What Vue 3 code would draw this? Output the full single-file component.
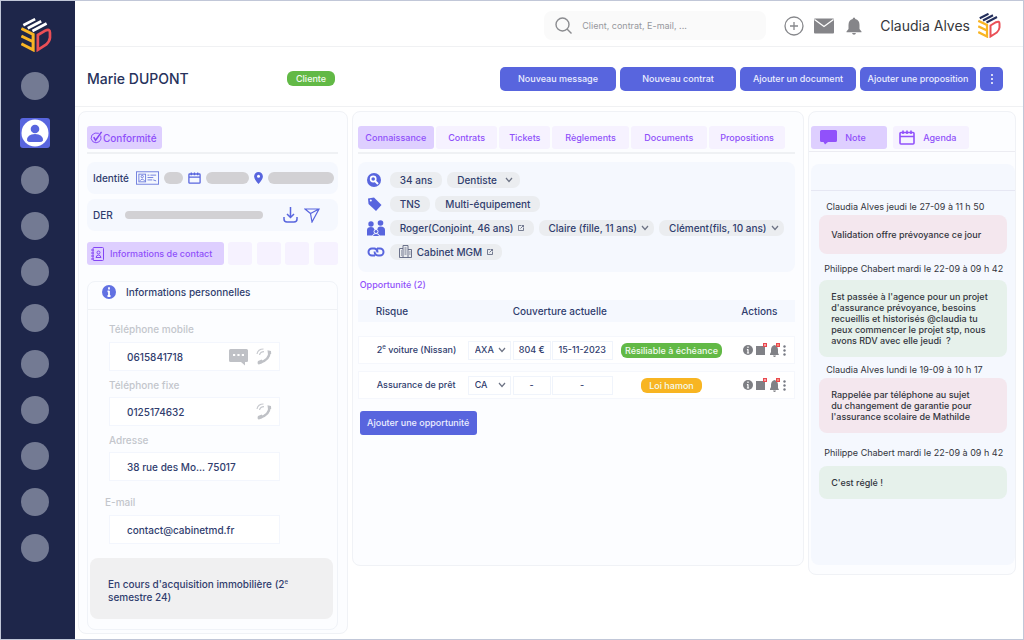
<script setup>
import { h, ref } from 'vue'

const Logo = (props) =>
  h('svg', { viewBox: '0 0 92 100', fill: 'none', 'aria-hidden': 'true' }, [
    h('path', { d: 'M7 21L42 3M20 30L60 9M34 38L76 16', stroke: props.bars, 'stroke-width': 8 }),
    h('path', { d: 'M1 31L36 48V94L1 76M1 53L36 70', stroke: '#f9b524', 'stroke-width': 9 }),
    h('path', { d: 'M50 50L72 37Q86 30 86 43V58Q85 69 75 78L50 94Z', stroke: '#ea4f56', 'stroke-width': 8 })
  ])
Logo.props = ['bars']

const Chevron = () =>
  h('svg', { class: 'chev', viewBox: '0 0 8 6', width: 8, height: 6, fill: 'none', stroke: '#6d7384', 'stroke-width': 1.2, 'aria-hidden': 'true' }, [
    h('path', { d: 'M1 1L4 4.5L7 1' })
  ])

const Ext = () =>
  h('svg', { viewBox: '0 0 12 12', width: 6, height: 6, fill: 'none', stroke: '#555d78', 'stroke-width': 1.6, 'aria-hidden': 'true' }, [
    h('path', { d: 'M6 1H1V11H11V6M5 7L11 1M7 1H11V5' })
  ])

const Calendar = () =>
  h('svg', { viewBox: '0 0 16 15', fill: 'none', stroke: 'currentColor', 'stroke-width': 1.6, 'aria-hidden': 'true' }, [
    h('path', { d: 'M2 2.500H14Q15 2.500 15 3.500V13Q15 14 14 14H2Q1 14 1 13V3.500Q1 2.500 2 2.500ZM1 6.500H15M4 0.500V4M8 0.500V4M12 0.500V4' })
  ])

const Phone = () =>
  h('svg', { viewBox: '0 0 16 17', width: 16, height: 17, fill: 'none', 'aria-hidden': 'true' }, [
    h('path', { d: 'M13.5 4Q13.5 12 4 14.5', stroke: '#bfc1c6', 'stroke-width': 2.4 }),
    h('path', { d: 'M11.5 2.2L15 3L15.2 6L12 6.6ZM2 13L5.8 11.6L6.6 15L3 16.6Q0.8 16 2 13Z', fill: '#bfc1c6' }),
    h('path', { d: 'M1 6Q2 1 7.5 1M3.5 7Q4.2 3.6 8 3.6', stroke: '#c8cacf', 'stroke-width': 1.2 })
  ])

const tabs = ['Connaissance', 'Contrats', 'Tickets', 'Règlements', 'Documents', 'Propositions']
const actions = ['Nouveau message', 'Nouveau contrat', 'Ajouter un document', 'Ajouter une proposition']
const fields = [
  { id: 'mobile', label: 'Téléphone mobile', value: '0615841718', sms: true, call: true },
  { id: 'fixe', label: 'Téléphone fixe', value: '0125174632', call: true },
  { id: 'adresse', label: 'Adresse', value: '38 rue des Mo... 75017' },
  { id: 'email', label: 'E-mail', value: 'contact@cabinetmd.fr' }
]
const rows = [
  { exp: 'e', name: ['2', ' voiture (Nissan)'], insurer: 'AXA', price: '804 €', date: '15-11-2023', tag: 'Résiliable à échéance', tone: 'green' },
  { exp: '', name: ['Assurance de prêt', ''], insurer: 'CA', price: '-', date: '-', tag: 'Loi hamon', tone: 'amber' }
]
const notes = [
  { who: 'Claudia Alves jeudi le 27-09 à 11 h 50', text: ['Validation offre prévoyance ce jour'], tone: 'pink first' },
  { who: 'Philippe Chabert mardi le 22-09 à 09 h 42', text: ["Est passée à l'agence pour un projet", "d'assurance prévoyance, besoins", 'recueillis et historisés @claudia tu', 'peux commencer le projet stp, nous', 'avons RDV avec elle jeudi  ?'], tone: 'mint' },
  { who: 'Claudia Alves lundi le 19-09 à 10 h 17', text: ['Rappelée par téléphone au sujet', 'du changement de garantie pour', "l'assurance scolaire de Mathilde"], tone: 'pink' },
  { who: 'Philippe Chabert mardi le 22-09 à 09 h 42', text: ["C'est réglé !"], tone: 'mint last' }
]
const active = ref('Connaissance')
</script>

<template>
  <div class="app">
    <nav class="side" aria-label="Navigation">
      <Logo class="side-logo" bars="#ffffff" />
      <button class="dot" aria-label="Accueil"></button>
      <button class="dot current" aria-label="Clients">
        <svg viewBox="0 0 30 30" width="30" height="30"><circle cx="15" cy="15" r="13.5" fill="#fff" /><circle cx="15" cy="11" r="4.3" fill="#5865de" /><path d="M7 22.500Q7 16 15 16T23 22.500Q22 24 20 24H10Q8 24 7 22.500Z" fill="#5865de" /></svg>
      </button>
      <button v-for="n in 9" :key="n" class="dot" :aria-label="'Module ' + n"></button>
    </nav>

    <div class="main">
      <header class="top">
        <label class="search">
          <svg viewBox="0 0 17 17" width="17" height="17" fill="none" stroke="#8b8c90" stroke-width="1.4"><circle cx="7.500" cy="7.500" r="6.500" /><path d="M12 12L16.500 16.500" /></svg>
          <input type="text" placeholder="Client, contrat, E-mail, ..." aria-label="Recherche" />
        </label>
        <button class="icon" aria-label="Ajouter"><svg viewBox="0 0 20 20" width="20" height="20" fill="none" stroke="#87888c" stroke-width="1.300"><circle cx="10" cy="10" r="9" /><path d="M10 6V14M6 10H14" /></svg></button>
        <button class="icon mail" aria-label="Messages"><svg viewBox="0 0 20 16" width="20" height="16"><rect y="0.500" width="20" height="15" rx="1" fill="#858589" /><path d="M0.500 1.500L10 8.500L19.500 1.500" fill="none" stroke="#fff" stroke-width="1.300" /></svg></button>
        <button class="icon bell" aria-label="Alertes"><svg viewBox="0 0 16 18" width="16" height="18" fill="#858589"><path d="M8 0.500Q9.300 0.500 9.300 2Q13.500 3 13.500 8V12L15.500 14.500V15.300H0.500V14.500L2.500 12V8Q2.500 3 6.700 2Q6.700 0.500 8 0.500ZM6 16H10Q9.500 17.700 8 17.700T6 16Z" /></svg></button>
        <span class="user">Claudia Alves</span>
        <Logo class="user-logo" bars="#242f5c" />
      </header>

      <section class="client">
        <h1>Marie DUPONT</h1>
        <span class="tag green status">Cliente</span>
        <div class="actions">
          <button v-for="a in actions" :key="a" class="btn">{{ a }}</button>
          <button class="btn more" aria-label="Plus"><i></i><i></i><i></i></button>
        </div>
      </section>

      <div class="cols">
        <aside class="panel left">
          <div class="tabrow lined">
            <button class="tab on conf">
              <svg viewBox="0 0 14 14" width="13" height="13" fill="none" stroke="#8445f5"><path d="M11.500 5Q13 9 10 11.500Q6.500 14 3 11.500Q0 8.500 2 4.500Q5 1 9.500 2.500" stroke-width="1" /><path d="M4 6.500L6 10L12.500 1" stroke-width="1.600" /></svg>Conformité
            </button>
          </div>
          <div class="card ident">
            <span>Identité</span>
            <svg viewBox="0 0 24 14" width="23" height="14" fill="none" stroke="#7280de"><rect x="0.500" y="0.500" width="23" height="13" /><rect x="3" y="3" width="7" height="8" /><circle cx="6.500" cy="5.500" r="1.200" /><path d="M4 10Q6.500 6.500 9 10M12 4H14M15 4H21M12 6.500H18M12 9H17M18 9L21 10" /></svg>
            <b class="bar b1"></b>
            <Calendar class="cal" />
            <b class="bar b2"></b>
            <svg viewBox="0 0 9 12" width="9" height="12"><path d="M4.500 0A4.400 4.400 0 0 1 8.900 4.400Q8.900 7 4.500 12Q0.100 7 0.100 4.400A4.400 4.400 0 0 1 4.500 0Z" fill="#5865de" /><circle cx="4.500" cy="4.300" r="1.500" fill="#fff" /></svg>
            <b class="bar b3"></b>
          </div>
          <div class="card der">
            <span>DER</span>
            <b class="bar thin"></b>
            <button class="icon" aria-label="Télécharger"><svg viewBox="0 0 15 16" width="15" height="16" fill="none" stroke="#5865de" stroke-width="1.500"><path d="M7.500 0V10M4 7L7.500 10.500L11 7M1 10V12Q1 15 4 15H11Q14 15 14 12V10" /></svg></button>
            <button class="icon" aria-label="Envoyer"><svg viewBox="0 0 16 15" width="16" height="15" fill="none" stroke="#5865de" stroke-width="1.200"><path d="M1 1H15L8 14L6.500 5.500ZM1 1L6.500 5.500L15 1" /></svg></button>
          </div>
          <div class="tabrow contact">
            <button class="tab on">
              <svg viewBox="0 0 13 14" width="13" height="14" fill="none" stroke="#8445f5"><rect x="2" y="0.500" width="10.500" height="13" rx="1" /><path d="M0 3H3M0 6H3M0 9H3M0 12H3M5 10.500H10Q9.500 8 7.500 8T5 10.500Z" /><circle cx="7.500" cy="5.500" r="1.500" /></svg>Informations de contact
            </button>
            <button v-for="n in 4" :key="n" class="tab blank" :aria-label="'Section ' + n"></button>
          </div>
          <section class="perso">
            <h2>
              <svg viewBox="0 0 14 14" width="14" height="14"><circle cx="7" cy="7" r="7" fill="#6271e2" /><path d="M7 2.300V4.500M7 5.700V11.500M5.500 6.300H7M5.500 11H8.500" stroke="#fff" stroke-width="1.800" fill="none" /></svg>Informations personnelles
            </h2>
            <div class="form">
              <div v-for="f in fields" :key="f.id" class="field" :class="f.id">
                <label :for="f.id">{{ f.label }}</label>
                <div class="box">
                  <input :id="f.id" type="text" :value="f.value" />
                  <button v-if="f.sms" class="icon" aria-label="SMS"><svg viewBox="0 0 19 18" width="19" height="18"><path d="M1.500 1H17.500Q19 1 19 2.500V13Q19 14 17.500 14H16V17.500L12 14H1.500Q0 14 0 12.500V2.500Q0 1 1.500 1Z" fill="#bfc1c6" /><path d="M4 7H6.200M8.400 7H10.600M12.800 7H15" stroke="#fff" stroke-width="2.200" /></svg></button>
                  <button v-if="f.call" class="icon" aria-label="Appeler"><Phone /></button>
                </div>
              </div>
            </div>
            <p class="memo">En cours d'acquisition immobilière (2<sup>e</sup><br />semestre 24)</p>
          </section>
        </aside>

        <main class="panel mid">
          <div class="tabrow lined six">
            <button v-for="t in tabs" :key="t" class="tab" :class="{ on: t === active }" @click="active = t">{{ t }}</button>
          </div>
          <section class="card info">
            <div class="line">
              <svg viewBox="0 0 14 14" width="14" height="14"><circle cx="7" cy="7" r="7" fill="#5865de" /><circle cx="6.200" cy="6" r="2.600" fill="none" stroke="#fff" stroke-width="1.600" /><path d="M8 8L11 11" stroke="#fff" stroke-width="2" /></svg>
              <span class="chip">34 ans</span>
              <button class="chip wide">Dentiste <Chevron /></button>
            </div>
            <div class="line">
              <svg viewBox="0 0 15 14" width="15" height="14"><path d="M1 1.500L7 0.500L14.500 8L9 14L1.500 7Z" fill="#5865de" /><circle cx="3.800" cy="3.500" r="1" fill="#fff" /></svg>
              <span class="chip">TNS</span>
              <span class="chip">Multi-équipement</span>
            </div>
            <div class="line">
              <svg viewBox="0 0 18 16" width="18" height="16" fill="#5865de"><circle cx="4" cy="4" r="2.700" /><circle cx="13.500" cy="3" r="2.800" /><path d="M0 15.500V10Q0 7 4 7Q7 7 7 9L9 11L10.500 9Q10.500 6.500 13.500 6.500Q18 6.500 18 10V15.500Z" /><circle cx="9" cy="11.500" r="2" stroke="#f5f8fe" /><path d="M5.500 16Q6 13.500 9 13.500T12.500 16" stroke="#f5f8fe" /></svg>
              <span class="chip">Roger(Conjoint, 46 ans) <Ext /></span>
              <button class="chip">Claire (fille, 11 ans) <Chevron /></button>
              <button class="chip">Clément(fils, 10 ans) <Chevron /></button>
            </div>
            <div class="line">
              <svg viewBox="0 0 18 10" width="18" height="10" fill="none" stroke="#5865de" stroke-width="2"><path d="M8 8.500H5A3.500 3.500 0 0 1 5 1.500H7.500Q10.500 2 10.500 5.500M10 1.500H13A3.500 3.500 0 0 1 13 8.500H11Q7.500 8 7.500 4.500" /></svg>
              <span class="chip firm"><svg viewBox="0 0 13 13" width="13" height="13" fill="none" stroke="#5d6580" stroke-width="0.900"><path d="M4 12.500V0.500H9V12.500M4 3.500H0.500V12.500H12.500V4.500H9M5.500 3H7.500M5.500 5H7.500M5.500 7H7.500M5.500 9H7.500M2 6H3M2 8H3M2 10H3M10.200 7H11.500M10.200 9H11.500" /></svg>Cabinet MGM <Ext /></span>
            </div>
          </section>

          <h2 class="opp">Opportunité (2)</h2>
          <table>
            <colgroup><col class="c1" /><col class="c2" /><col class="c3" /><col class="c4" /><col /><col class="c6" /></colgroup>
            <thead>
              <tr><th colspan="2" class="pad">Risque</th><th colspan="3">Couverture actuelle</th><th class="act-head">Actions</th></tr>
            </thead>
            <tbody>
              <tr v-for="(r, i) in rows" :key="i">
                <td class="pad">{{ r.name[0] }}<sup v-if="r.exp">{{ r.exp }}</sup>{{ r.name[1] }}</td>
                <td>
                  <label class="pick"><select :aria-label="'Assureur ' + (i + 1)"><option>{{ r.insurer }}</option></select><Chevron /></label>
                </td>
                <td><span class="cell">{{ r.price }}</span></td>
                <td><span class="cell">{{ r.date }}</span></td>
                <td class="mid-cell"><span class="tag" :class="r.tone">{{ r.tag }}</span></td>
                <td>
                  <div class="acts">
                    <button class="icon" aria-label="Détails"><svg viewBox="0 0 10 10" width="10" height="10"><circle cx="5" cy="5" r="5" fill="#7d7e83" /><path d="M5 1.500V3.100M5 4.200V8.300M3.900 4.600H5M3.900 8H6.100" stroke="#fff" stroke-width="1.200" fill="none" /></svg></button>
                    <button class="icon" aria-label="Messages"><svg viewBox="0 0 11 14" width="11" height="14"><path d="M0 3H9V12H0Z" fill="#808186" /><rect x="7" y="0" width="4" height="4" fill="#e9484f" /><path d="M9 1V3" stroke="#fff" /></svg></button>
                    <button class="icon" aria-label="Alertes"><svg viewBox="0 0 10 14" width="10" height="14"><path d="M4.500 2Q8 3 8 7V10L9 12H0V11L1 9V7Q1 3 4.500 2ZM3 12.500H6Q5.500 14 4.500 14T3 12.500Z" fill="#808186" /><rect x="6" y="0" width="4" height="4" fill="#e9484f" /><path d="M8 1V3" stroke="#ffd9a0" /></svg></button>
                    <button class="icon" aria-label="Plus"><svg viewBox="0 0 3 11" width="3" height="11" fill="#777a84"><circle cx="1.500" cy="1.500" r="1.200" /><circle cx="1.500" cy="5.500" r="1.200" /><circle cx="1.500" cy="9.500" r="1.200" /></svg></button>
                  </div>
                </td>
              </tr>
            </tbody>
          </table>
          <button class="btn add">Ajouter une opportunité</button>
        </main>

        <aside class="panel right">
          <div class="tabrow">
            <button class="tab on note-tab"><svg viewBox="0 0 17 15" width="17" height="15" fill="#9151fb"><path d="M1.500 0H15.500Q17 0 17 1.500V10.500Q17 12 15.500 12H8L5 14.500L3.500 12H1.500Q0 12 0 10.500V1.500Q0 0 1.500 0Z" /></svg>Note</button>
            <button class="tab"><Calendar class="cal" />Agenda</button>
          </div>
          <section class="notes">
            <div class="notes-head"></div>
            <article v-for="(n, i) in notes" :key="i" :class="n.tone">
              <h3>{{ n.who }}</h3>
              <p><template v-for="(l, j) in n.text" :key="j"><br v-if="j" />{{ l }}</template></p>
            </article>
          </section>
        </aside>
      </div>
    </div>
  </div>
</template>

<style>
body { background: #fff; }
</style>

<style scoped>
* { box-sizing: border-box; }
.app { display: flex; min-height: 100vh; border: 1px solid #c1c7d8; font-family: Inter, "Liberation Sans", sans-serif; color: #303d6e; font-size: 10px; line-height: 12px; font-weight: 500; }
h1, h2, h3, p { margin: 0; font-weight: 500; }
button { font: inherit; color: inherit; border: 0; padding: 0; background: none; cursor: pointer; }
input, select { font: inherit; color: inherit; border: 0; padding: 0; background: none; outline: 0; min-width: 0; }
svg { flex: none; }
.icon { display: flex; }

.side { flex: none; width: 74px; background: #1e264a; padding: 17px 0 0 20px; display: flex; flex-direction: column; align-items: flex-start; gap: 18px; }
.side-logo { width: 31px; height: 34px; margin-bottom: 2px; }
.dot { width: 28px; height: 28px; border-radius: 50%; background: #737a93; flex: none; }
.dot.current { width: 30px; height: 30px; margin-left: -1px; border-radius: 3px; background: #5865de; }

.main { flex: 1; min-width: 0; display: flex; flex-direction: column; }
.top { height: 46px; display: flex; align-items: center; justify-content: flex-end; padding: 4px 22px 0 0; border-bottom: 1px solid #f0f1f3; }
.search { display: flex; align-items: center; gap: 10px; width: 222px; height: 29px; border-radius: 8px; background: #fafafa; padding: 0 11px; margin-right: 18px; }
.search input { flex: 1; font-size: 9px; font-weight: 400; height: 20px; }
.search input::placeholder { color: #97989d; opacity: 1; }
.mail { margin-left: 10px; }
.bell { margin: 0 18px 0 12px; }
.user { font-size: 14px; line-height: 18px; font-weight: 400; color: #36373c; margin-right: 8px; }
.user-logo { width: 23px; height: 25px; }

.client { height: 60px; display: flex; align-items: center; padding: 4px 20px 0 12px; border-bottom: 1px solid #f0f1f3; }
.client h1 { width: 200px; font-size: 14px; line-height: 18px; color: #27325c; }
.tag { display: inline-block; color: #f3fbef; border-radius: 6px; font-size: 9px; line-height: 15px; padding: 0 4px; white-space: nowrap; }
.green { background: #62b946; }
.amber { background: #f8b522; padding: 0 8px; }
.status { padding: 0 9px; }
.actions { display: flex; gap: 4px; margin-left: auto; }
.btn { background: #5865de; color: #eceeff; border-radius: 5px; height: 24px; width: 116px; font-size: 9px; white-space: nowrap; }
.more { width: 23px; display: flex; flex-direction: column; align-items: center; justify-content: center; gap: 2px; }
.more i { width: 2px; height: 2px; background: #fff; border-radius: 50%; }

.cols { display: grid; grid-template-columns: 270fr 453fr 208fr; gap: 4px; align-items: start; padding: 4px 7px 4px 3px; }
.panel { border: 1px solid #f0f2f6; border-radius: 8px; background: #fcfdff; min-width: 0; }
.tab { height: 23px; border-radius: 3px; background: #f6f2ff; color: #8f50fa; font-size: 9px; white-space: nowrap; display: flex; align-items: center; justify-content: center; }
.tab.on { background: #decfff; }
.tabrow { display: flex; }
.lined { padding-bottom: 3px; border-bottom: 2px solid #eff1f4; }
.card { background: #f5f8fe; border-radius: 8px; }

.left { padding: 14px 9px 3px 8px; }
.left .lined { margin-bottom: 8px; }
.tab.conf { width: 75px; font-size: 10px; justify-content: flex-start; padding-left: 3px; }
.ident, .der { height: 32px; display: flex; align-items: center; padding: 0 4px 0 6px; }
.ident { justify-content: space-between; margin-bottom: 5px; }
.ident span { width: 38px; }
.bar { height: 12px; border-radius: 6px; background: #d2d1d4; }
.b1 { width: 19px; }
.b2 { width: 43px; }
.b3 { width: 66px; }
.thin { width: 138px; height: 8px; margin: 0 20px 0 12px; }
.der .icon { margin-right: 6px; }
.cal { width: 13px; height: 12px; color: #5865de; }
.contact { margin: 11px 0 16px; justify-content: space-between; }
.contact .on { width: 137px; gap: 6px; justify-content: flex-start; padding-left: 4px; }
.blank { width: 24px; }

.perso { border: 1px solid #f0f3f8; border-radius: 8px; padding-bottom: 10px; }
.perso h2 { display: flex; align-items: center; gap: 10px; height: 28px; padding: 0 0 7px 14px; font-size: 10px; border-bottom: 1px solid #eff1f4; }
.form { padding: 12px 57px 0 21px; }
.field label { display: block; color: #c3c6cc; font-size: 10px; line-height: 14px; margin-bottom: 6px; }
.box { display: flex; align-items: center; gap: 8px; height: 29px; background: #fff; border: 1px solid #f3f6fd; padding: 0 7px 0 17px; margin-bottom: 7px; }
.box input { flex: 1; height: 20px; }
.fixe label, .adresse label { margin-bottom: 5px; }
.adresse .box, .email .box { margin-bottom: 14px; }
.email label { margin-left: -4px; }
.memo { background: #f0f0f1; border-radius: 8px; margin: 0 4px 0 2px; padding: 20px 18px 15px; line-height: 13px; }

.mid { padding: 14px 8px 130px 5px; }
.six { gap: 2px; padding-right: 10px; margin-bottom: 8px; }
.six .tab { flex: 1 1 76px; }
.six .tab:nth-child(2) { flex-basis: 61px; }
.six .tab:nth-child(3) { flex-basis: 51px; }
.info { padding: 9px 0 12px 9px; display: flex; flex-direction: column; gap: 7px; }
.line { display: grid; grid-template-columns: 18px repeat(3, max-content); align-items: center; column-gap: 5px; height: 17px; }
.chip { display: flex; align-items: center; gap: 4px; height: 16px; border-radius: 7px; background: #ebedf0; padding: 0 10px; white-space: nowrap; }
.line .chip .chev { margin-right: -5px; }
.line .wide { gap: 8px; }
.line .wide .chev { margin-right: -3px; }
.firm { padding: 0 9px; gap: 5px; }
.opp { color: #9151fb; font-size: 9px; line-height: 12px; margin: 7px 0 9px 2px; }
table { width: 100%; table-layout: fixed; border-spacing: 0 7px; margin: -7px 0 5px; font-size: 9px; }
.c1 { width: 110px; }
.c2 { width: 45px; }
.c3 { width: 39px; }
.c4 { width: 62px; }
.c6 { width: 66px; }
th { background: #f5f8fe; text-align: left; font-weight: 500; font-size: 10px; height: 22px; padding: 0; }
th.act-head { padding-left: 12px; }
.pad { padding-left: 18px; }
td { padding: 0; height: 28px; background: #fff; border: solid #f5f7fc; border-width: 1px 0; white-space: nowrap; }
td:first-child { border-left-width: 1px; }
td:last-child { border-right-width: 1px; }
thead::after { content: ""; display: block; height: 0; }
sup { font-size: 6px; line-height: 0; }
.pick, .cell { display: flex; align-items: center; height: 19px; border: 1px solid #f0f4fb; margin-right: 2px; }
.pick { padding: 0 4px 0 6px; }
.pick select { appearance: none; flex: 1; }
.cell { justify-content: center; margin-right: 1px; }
.mid-cell { text-align: center; }
.acts { display: flex; align-items: center; gap: 3px; padding-left: 14px; }
.add { display: block; margin-left: 2px; border-radius: 3px; width: 117px; }

.right { padding: 14px 0 9px; }
.right .tabrow { gap: 6px; padding: 0 2px 2px; border-bottom: 1px solid #ececf2; margin-bottom: 12px; }
.right .tab { width: 76px; gap: 8px; justify-content: flex-start; padding-left: 6px; }
.right .note-tab { padding-left: 9px; }
.right .cal { width: 16px; height: 15px; color: #9151fb; }
.notes { background: #f5f8fe; border-radius: 8px; margin-left: 2px; padding-bottom: 58px; color: #33353d; }
.notes-head { height: 27px; border-bottom: 1px solid #e6e7f3; margin-bottom: 9px; }
article { padding: 0 8px; margin-bottom: 8px; }
article h3 { font-size: 9px; line-height: 13px; font-weight: 400; padding-left: 5px; margin-bottom: 2px; white-space: nowrap; }
article p { border-radius: 8px; padding: 11px 12px; font-size: 9px; line-height: 11px; white-space: pre-wrap; }
.first p { padding: 14px 12px; }
.pink p { background: #f4e7ee; }
.mint p { background: #e6f1eb; }
.mint { margin-bottom: 6px; }
.mint h3 { margin-bottom: 5px; }
.pink h3 { padding-left: 7px; }
.last { padding-top: 5px; margin-bottom: 8px; }
.last h3 { margin-bottom: 7px; }
</style>
